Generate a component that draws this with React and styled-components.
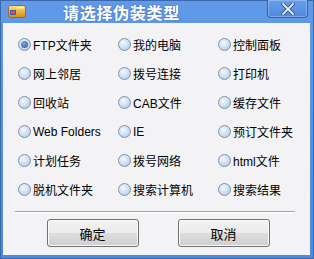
import styled, { createGlobalStyle } from 'styled-components';

const GlobalStyle = createGlobalStyle`
  html, body {
    margin: 0;
    padding: 0;
    background: #ffffff;
  }
`;

const Window = styled.div`
  background: linear-gradient(#6199e8, #4f88dc);
  border: 1px solid #3b67ad;
  box-sizing: border-box;
  display: flex;
  flex-direction: column;
  font-family: 'Liberation Sans', 'Noto Sans CJK SC', sans-serif;
  height: 259px;
  width: 314px;
`;

const TitleBar = styled.div`
  align-items: center;
  display: flex;
  height: 22px;
  position: relative;
`;

const AppIcon = styled.svg`
  height: 14px;
  margin-left: 7px;
  margin-top: -2px;
  width: 18px;
`;

const Title = styled.div`
  color: #ffffff;
  font-family: 'Noto Sans CJK SC', sans-serif;
  font-size: 16px;
  font-weight: 700;
  letter-spacing: 0.7px;
  margin-left: 37px;
  margin-top: -1px;
  text-shadow: 0 0 2px rgba(30, 60, 120, 0.5);
`;

const CloseButton = styled.div`
  align-items: center;
  background: linear-gradient(#6a9fea, #5088dc);
  border: 1px solid #3a5fa6;
  border-top: none;
  border-radius: 0 0 4px 4px;
  box-shadow: inset 0 0 0 1px rgba(160, 195, 245, 0.6);
  display: flex;
  height: 17px;
  justify-content: center;
  position: absolute;
  right: 5px;
  top: -1px;
  width: 39px;
`;

const Client = styled.div`
  background: #f3f3f5;
  display: flex;
  flex: 1;
  flex-direction: column;
  margin: 0 3px 3px 2px;
`;

const OptionGrid = styled.div`
  display: grid;
  grid-auto-rows: 29px;
  grid-template-columns: 100px 100px 1fr;
  padding: 7px 0 0 15px;
`;

const Option = styled.label`
  align-items: center;
  color: #000000;
  display: flex;
  font-size: 12px;
  gap: 2px;
  white-space: nowrap;
`;

const Radio = styled.span`
  background: radial-gradient(circle at 40% 35%, #f4f8fe 0%, #d3e2f4 45%, #a9c2e0 100%);
  border: 1px solid #7d93ad;
  border-radius: 50%;
  box-sizing: border-box;
  display: inline-flex;
  align-items: center;
  justify-content: center;
  flex: none;
  height: 13px;
  width: 13px;

  &::after {
    content: '';
    display: ${(p) => (p.$checked ? 'block' : 'none')};
    background: radial-gradient(circle at 40% 35%, #7fa6d8, #2d5795);
    border-radius: 50%;
    height: 7px;
    width: 7px;
  }
`;

const Separator = styled.div`
  border-top: 1px solid #a2a2a2;
  border-bottom: 1px solid #ffffff;
  margin: 7px 15px 0 12px;
`;

const ButtonRow = styled.div`
  display: flex;
  gap: 39px;
  justify-content: center;
  padding: 6px 0 0 3px;
`;

const Button = styled.button`
  background: linear-gradient(#f3f3f3 0%, #ebebeb 48%, #dddddd 52%, #cfcfcf 100%);
  border: 1px solid #707070;
  border-radius: 3px;
  box-shadow: inset 0 0 0 1px #fbfbfb;
  color: #000000;
  font-family: 'Noto Sans CJK SC', sans-serif;
  font-size: 13px;
  height: 28px;
  padding: 0;
  width: 92px;
`;

const options = [
  'FTP文件夹', '我的电脑', '控制面板',
  '网上邻居', '拨号连接', '打印机',
  '回收站', 'CAB文件', '缓存文件',
  'Web Folders', 'IE', '预订文件夹',
  '计划任务', '拨号网络', 'html文件',
  '脱机文件夹', '搜索计算机', '搜索结果',
];

const App = () => {
  return (
    <>
      <GlobalStyle />
      <Window>
        <TitleBar>
          <AppIcon viewBox="0 0 18 14">
            <defs>
              <linearGradient id="case" x1="0" y1="0" x2="0" y2="1">
                <stop offset="0" stopColor="#ffe27a" />
                <stop offset="1" stopColor="#d98a12" />
              </linearGradient>
            </defs>
            <rect x="0.5" y="1.5" width="17" height="12" rx="2" fill="url(#case)" stroke="#9a5a10" strokeWidth="0.8" />
            <rect x="2" y="6" width="6" height="5" fill="#3a5fb0" />
            <rect x="3" y="7" width="4" height="3" fill="#e84a3a" />
            <rect x="9" y="3" width="7" height="1.5" fill="#fff4c0" opacity="0.8" />
          </AppIcon>
          <Title>请选择伪装类型</Title>
          <CloseButton>
            <svg width="14" height="12" viewBox="0 0 14 12">
              <path d="M2 1 L12 11 M12 1 L2 11" stroke="#2c4f8c" strokeWidth="3.6" strokeLinecap="square" />
              <path d="M2 1 L12 11 M12 1 L2 11" stroke="#e8f0fc" strokeWidth="1.8" strokeLinecap="square" />
            </svg>
          </CloseButton>
        </TitleBar>
        <Client>
          <OptionGrid>
            {options.map((name, i) => (
              <Option key={name}>
                <Radio $checked={i === 0} />
                {name}
              </Option>
            ))}
          </OptionGrid>
          <Separator />
          <ButtonRow>
            <Button>确定</Button>
            <Button>取消</Button>
          </ButtonRow>
        </Client>
      </Window>
    </>
  );
};

export default App;
